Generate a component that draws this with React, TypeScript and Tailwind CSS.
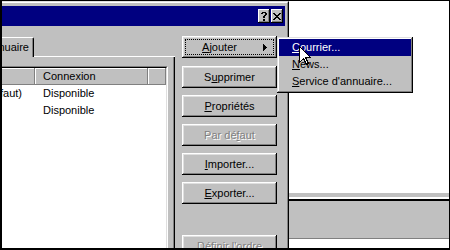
import React from "react";

const raised =
  "shadow-[inset_-1px_-1px_0_#000,inset_1px_1px_0_#fff,inset_-2px_-2px_0_#808080,inset_2px_2px_0_#dfdfdf]";

function U({ children }: { children: React.ReactNode }) {
  return <span className="underline underline-offset-[1px] decoration-1">{children}</span>;
}

function Btn({ children, disabled }: { children: React.ReactNode; disabled?: boolean }) {
  return (
    <div
      className={`h-[22px] w-full shrink-0 flex items-center justify-center bg-[#c0c0c0] ${raised} ${
        disabled ? "text-[#808080] [text-shadow:1px_1px_0_#fff]" : "text-black"
      }`}
    >
      <span className="whitespace-nowrap">{children}</span>
    </div>
  );
}

function CapBtn({ kind }: { kind: "help" | "close" }) {
  return (
    <div
      className={`w-[12px] h-[14px] bg-[#c0c0c0] flex items-center justify-center shadow-[inset_-1px_-1px_0_#000,inset_1px_1px_0_#fff,inset_-2px_-2px_0_#808080]`}
    >
      {kind === "close" ? (
        <svg width="8" height="7" viewBox="0 0 8 7" shapeRendering="crispEdges" className="-ml-px">
          <path
            fill="#000"
            d="M0 0h2v1H0zM6 0h2v1H6zM1 1h2v1H1zM5 1h2v1H5zM2 2h4v1H2zM3 3h2v1H3zM2 4h4v1H2zM1 5h2v1H1zM5 5h2v1H5zM0 6h2v1H0zM6 6h2v1H6z"
          />
        </svg>
      ) : (
        <svg width="6" height="9" viewBox="0 0 6 9" shapeRendering="crispEdges" className="-ml-px">
          <path
            fill="#000"
            d="M1 0h4v1H1zM0 1h2v1H0zM4 1h2v1H4zM4 2h2v1H4zM3 3h2v1H3zM2 4h2v1H2zM2 5h2v1H2zM2 7h2v1H2zM2 8h2v1H2z"
          />
        </svg>
      )}
    </div>
  );
}

function MenuItem({
  children,
  selected,
}: {
  children: React.ReactNode;
  selected?: boolean;
}) {
  return (
    <div
      className={`h-[17px] flex items-center pl-[13px] whitespace-nowrap ${
        selected ? "bg-[#000080] text-white" : "text-black"
      }`}
    >
      {children}
    </div>
  );
}

export default function App() {
  return (
    <div className="relative w-[450px] h-[250px] bg-black pt-px pl-[2px] pr-px pb-[2px] flex overflow-hidden font-['Liberation_Sans',Arial,sans-serif] text-[11px] leading-none text-black">
      {/* Dialog window */}
      <div className="w-[287px] h-full shrink-0 overflow-hidden border-t border-r border-t-[#dfdfdf] border-r-black">
        <div className="h-full border-t border-r border-t-white border-r-[#808080] bg-[#c0c0c0] pt-[3px] pr-[2px] flex flex-col">
          {/* caption */}
          <div className="h-[20px] shrink-0 bg-[#000080] flex justify-end items-center pr-[2px] gap-px">
            <CapBtn kind="help" />
            <CapBtn kind="close" />
          </div>

          {/* body */}
          <div className="flex-1 min-h-0 flex">
            {/* tab control */}
            <div className="w-[173px] shrink-0 pt-[11px] flex flex-col">
              <div className="h-[20px] shrink-0 flex">
                <div className="w-[32px] shrink-0 border-t border-r border-t-white border-r-black rounded-tr-[2px]">
                  <div className="h-full border-r border-r-[#808080] flex items-center justify-end pr-[3px] overflow-hidden">
                    <span className="whitespace-nowrap">Service d'annuaire</span>
                  </div>
                </div>
                <div className="flex-1 border-b border-b-white" />
              </div>
              <div className="flex-1 min-h-0 border-r border-r-black">
                <div className="h-full border-r border-r-[#808080] pt-[9px] pr-[5px]">
                  {/* list view */}
                  <div className="h-full border-t border-r border-t-[#808080] border-r-white">
                    <div className="h-full border-t border-r border-t-black border-r-[#dfdfdf] bg-white">
                      <div className="h-[17px] flex">
                        <div className="w-[33px] shrink-0 bg-[#c0c0c0] shadow-[inset_-1px_-1px_0_#808080,inset_0_1px_0_#fff]" />
                        <div className="w-[113px] shrink-0 bg-[#c0c0c0] shadow-[inset_-1px_-1px_0_#808080,inset_1px_1px_0_#fff] flex items-center pl-[8px]">
                          Connexion
                        </div>
                        <div className="flex-1 bg-[#c0c0c0] shadow-[inset_-1px_-1px_0_#808080,inset_1px_1px_0_#fff]" />
                      </div>
                      <div className="h-[17px] flex items-center">
                        <div className="w-[33px] shrink-0 flex justify-end pr-[13px] overflow-hidden">
                          <span className="whitespace-nowrap">(par défaut)</span>
                        </div>
                        <div className="pl-[8px]">Disponible</div>
                      </div>
                      <div className="h-[17px] flex items-center">
                        <div className="w-[33px] shrink-0" />
                        <div className="pl-[8px]">Disponible</div>
                      </div>
                    </div>
                  </div>
                </div>
              </div>
            </div>

            {/* buttons */}
            <div className="w-[95px] shrink-0 ml-[7px] pt-[10px] flex flex-col">
              <div className={`h-[22px] w-full shrink-0 bg-[#c0c0c0] p-[3px] flex ${raised}`}>
                <div className="flex-1 border border-dotted border-black flex items-center">
                  <span className="flex-1 text-center pr-[10px]">
                    <U>A</U>jouter
                  </span>
                  <svg width="4" height="7" viewBox="0 0 4 7" shapeRendering="crispEdges" className="mr-[6px]">
                    <path fill="#000" d="M0 0h1v7H0zM1 1h1v5H1zM2 2h1v3H2zM3 3h1v1H3z" />
                  </svg>
                </div>
              </div>
              <div className="mt-[8px] flex flex-col gap-[7px]">
                <Btn>
                  S<U>u</U>pprimer
                </Btn>
                <Btn>
                  <U>P</U>ropriétés
                </Btn>
                <Btn disabled>
                  Par dé<U>f</U>aut
                </Btn>
                <Btn>
                  <U>I</U>mporter...
                </Btn>
                <Btn>
                  <U>E</U>xporter...
                </Btn>
              </div>
              <div className="mt-[31px]">
                <Btn disabled>
                  <U>D</U>éfinir l'ordre
                </Btn>
              </div>
            </div>
          </div>
        </div>
      </div>

      {/* Background to the right */}
      <div className="flex-1 flex flex-col">
        <div className="flex-1 bg-white" />
        <div className="h-[4px] bg-[#c0c0c0]" />
        <div className="h-[2px] bg-white" />
        <div className="h-[2px] bg-black" />
        <div className="h-[37px] bg-[#c0c0c0]" />
        <div className="h-px bg-[#808080]" />
        <div className="h-[9px] bg-white" />
      </div>

      {/* Popup menu */}
      <div className="absolute left-[277px] top-[37px] w-[136px] bg-[#c0c0c0] pt-[2px] pb-[3px] px-[2px] shadow-[inset_-1px_-1px_0_#000,inset_1px_1px_0_#dfdfdf,inset_-2px_-2px_0_#808080,inset_2px_2px_0_#fff]">
        <MenuItem selected>
          <U>C</U>ourrier...
        </MenuItem>
        <MenuItem>
          <U>N</U>ews...
        </MenuItem>
        <MenuItem>
          <U>S</U>ervice d'annuaire...
        </MenuItem>
      </div>

      {/* Mouse cursor */}
      <svg
        className="absolute left-[299px] top-[46px]"
        width="13"
        height="20"
        viewBox="0 0 13 20"
        shapeRendering="crispEdges"
      >
        <path
          d="M0.5 0.5 L0.5 16.5 L4.5 12.5 L7.5 18.5 L9.5 17.5 L6.5 11.5 L11.5 11.5 Z"
          fill="#fff"
          stroke="#000"
          strokeWidth="1"
          strokeLinejoin="miter"
        />
      </svg>
    </div>
  );
}
